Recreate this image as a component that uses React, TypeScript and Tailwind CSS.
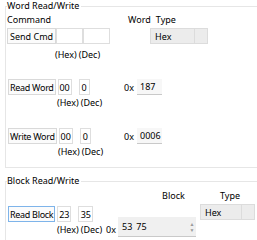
import React from "react";

function Btn({ label, focus, tight }: { label: string; focus?: boolean; tight?: boolean }) {
  return (
    <div
      className={
        "h-[16px] flex items-center justify-center whitespace-nowrap border bg-[#fbfbfb] " +
        (tight ? "px-[1px] tracking-[-0.3px] " : "px-[2px] ") +
        (focus ? "border-[#7eb4ea]" : "border-[#d9d9d9]")
      }
    >
      {label}
    </div>
  );
}

function TB({ v, w, ml }: { v: string; w: string; ml: string }) {
  return (
    <div className={"h-[16px] flex items-center justify-center border border-[#dedede] bg-white " + w + " " + ml}>
      {v}
    </div>
  );
}

function Combo({ w }: { w: string }) {
  return (
    <div className={"h-[16px] flex border border-[#dcdcdc] bg-[#ececec] " + w}>
      <div className="flex-1 flex items-center pl-[4px]">Hex</div>
      <div className="w-[13px] border-l border-[#dcdcdc]" />
    </div>
  );
}

function HexDec({ ml }: { ml: string }) {
  return (
    <div className={"flex h-[12px] items-center whitespace-nowrap " + ml}>
      <span>(Hex)</span>
      <span className="ml-[2px]">(Dec)</span>
    </div>
  );
}

function WordRow({ label, a, b, val }: { label: string; a: string; b: string; val: string }) {
  return (
    <div className="flex h-[16px] items-center">
      <div className="ml-[1px]">
        <Btn label={label} tight />
      </div>
      <TB v={a} w="w-[14px]" ml="ml-[2px]" />
      <TB v={b} w="w-[11px]" ml="ml-[7px]" />
      <div className="ml-auto mr-[3px]">0x</div>
      <div className="w-[25px] h-[16px] flex items-center pl-[3px] bg-[#f7f7f7] border-b border-[#c9c9c9] mr-[104px]">{val}</div>
    </div>
  );
}

export default function App() {
  return (
    <div className="w-[257px] h-[240px] bg-white overflow-hidden font-['Noto_Sans',sans-serif] text-[9px] leading-none text-black">
      <fieldset className="ml-[5px] mr-[-10px] mt-[1px] h-[167px] border border-[#e6e6e6] pl-[1px]">
        <legend className="pr-[2px] h-[10px] leading-[10px]">Word Read/Write</legend>
        <div className="mt-[2px] h-[12px] flex items-center">
          <span>Command</span>
          <span className="ml-[77px]">Word</span>
          <span className="ml-[5px]">Type</span>
        </div>
        <div className="mt-[3px] h-[16px] flex items-center">
          <Btn label="Send Cmd" />
          <TB v="" w="w-[27px]" ml="ml-0" />
          <TB v="" w="w-[27px]" ml="ml-0" />
          <div className="ml-[40px]">
            <Combo w="w-[58px]" />
          </div>
        </div>
        <HexDec ml="ml-[48px] mt-[4px]" />
        <div className="mt-[19px]">
          <WordRow label="Read Word" a="00" b="0" val="187" />
        </div>
        <HexDec ml="ml-[50px] mt-[1px]" />
        <div className="mt-[20px]">
          <WordRow label="Write Word" a="00" b="0" val="0006" />
        </div>
        <HexDec ml="ml-[51px] mt-[1px]" />
      </fieldset>

      <fieldset className="ml-[5px] mr-[-10px] mt-[8px] h-[80px] border border-[#e6e6e6] pl-[1px]">
        <legend className="pr-[2px] h-[10px] leading-[10px]">Block Read/Write</legend>
        <div className="flex items-start">
          <div className="flex flex-col pt-[20px]">
            <div className="flex h-[16px] items-center">
              <div className="ml-[1px]">
                <Btn label="Read Block" focus tight />
              </div>
              <TB v="23" w="w-[14px]" ml="ml-[2px]" />
              <TB v="35" w="w-[15px]" ml="ml-[7px]" />
            </div>
            <HexDec ml="ml-[50px] mt-[1px]" />
          </div>
          <div className="mt-[39px] ml-[4px]">0x</div>
          <div className="flex flex-col ml-[2px]">
            <div className="h-[12px] mt-[3px] flex items-center pl-[44px]">Block</div>
            <div className="mt-[16px] w-[78px] h-[20px] flex bg-[#f0f0f0] border-b border-[#c9c9c9]">
              <div className="flex-1 flex items-center pl-[4px] gap-[4px]">
                <span>53</span>
                <span>75</span>
              </div>
              <div className="w-[8px] flex flex-col items-center justify-center text-[5px] text-[#9a9a9a] leading-[6px]">
                <span>▲</span>
                <span>▼</span>
              </div>
            </div>
          </div>
          <div className="flex flex-col ml-[4px]">
            <div className="h-[12px] mt-[3px] flex items-center pl-[20px]">Type</div>
            <div className="mt-[3px]">
              <Combo w="w-[55px]" />
            </div>
          </div>
        </div>
      </fieldset>
    </div>
  );
}
